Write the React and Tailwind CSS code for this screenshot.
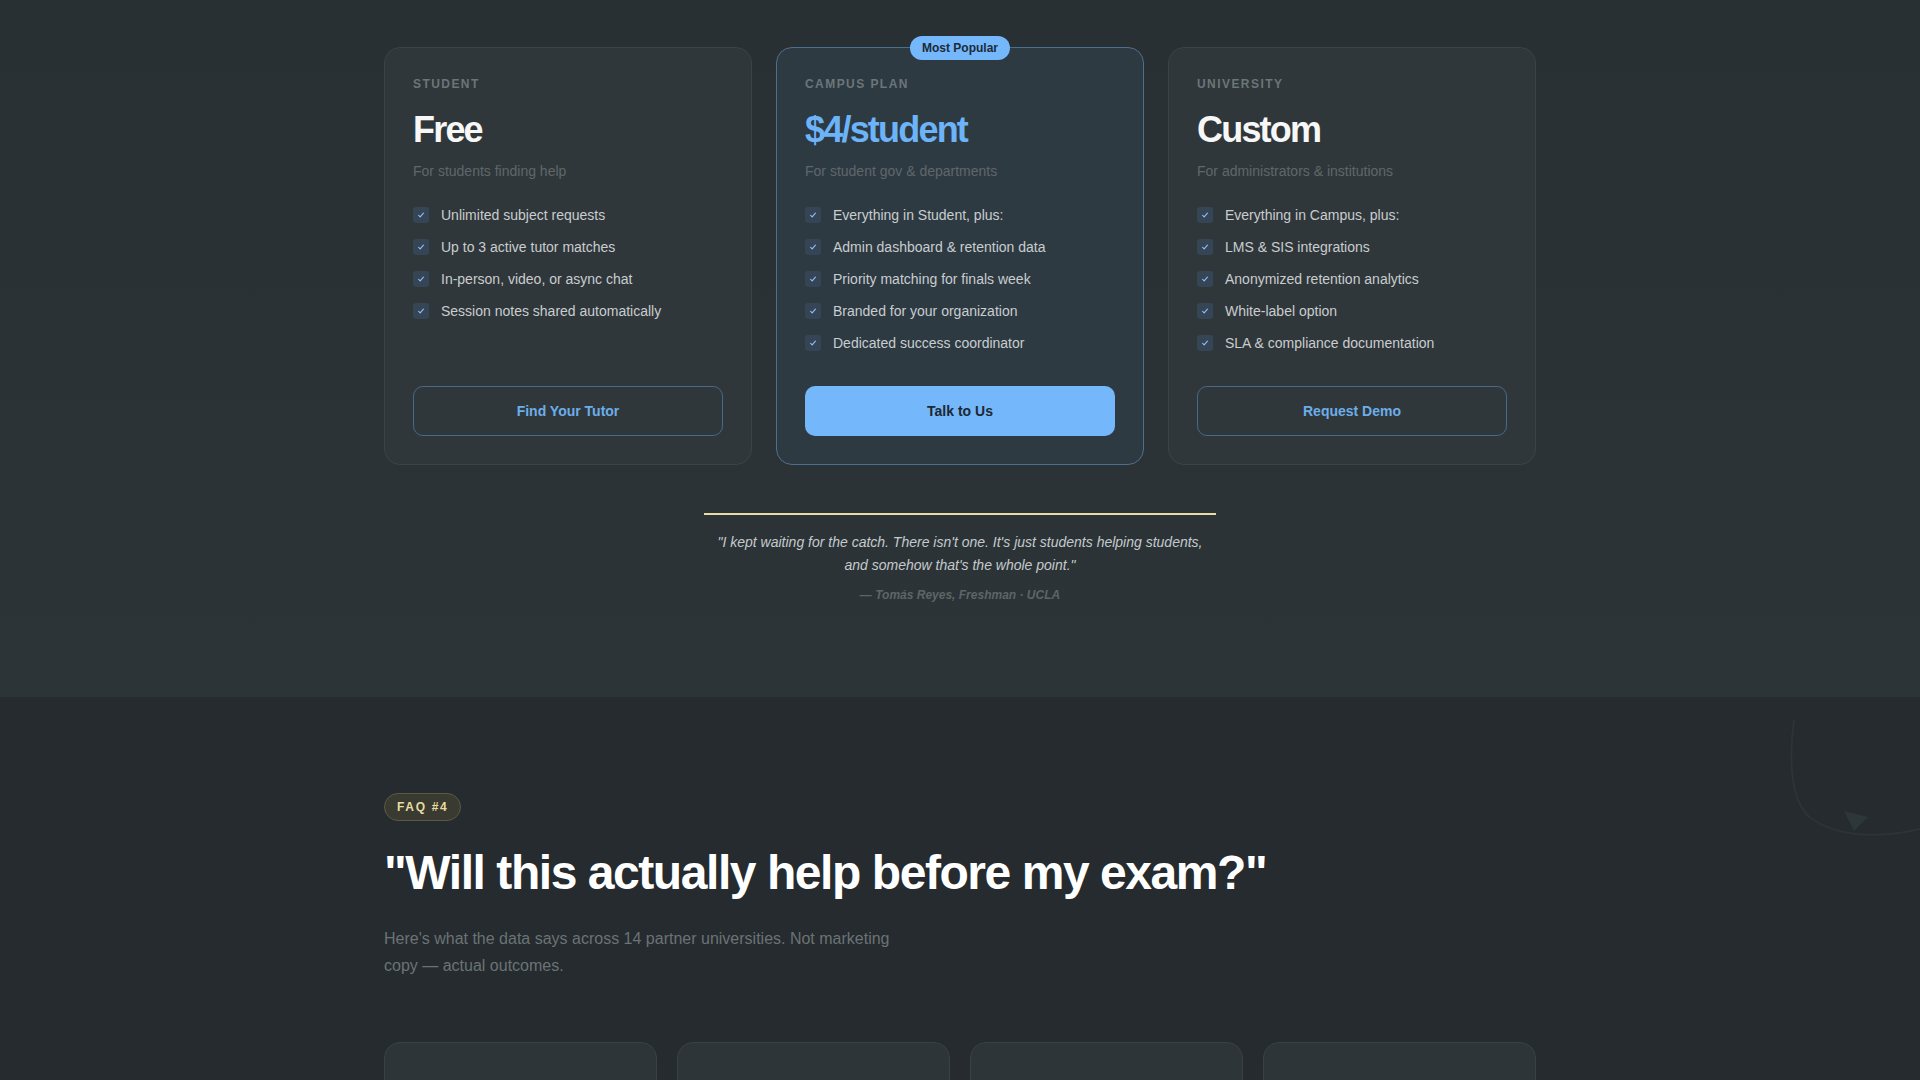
import React from "react";

const plans = [
  {
    label: "STUDENT",
    price: "Free",
    blurb: "For students finding help",
    features: [
      "Unlimited subject requests",
      "Up to 3 active tutor matches",
      "In-person, video, or async chat",
      "Session notes shared automatically",
    ],
    cta: "Find Your Tutor",
  },
  {
    label: "CAMPUS PLAN",
    price: "$4/student",
    blurb: "For student gov & departments",
    features: [
      "Everything in Student, plus:",
      "Admin dashboard & retention data",
      "Priority matching for finals week",
      "Branded for your organization",
      "Dedicated success coordinator",
    ],
    cta: "Talk to Us",
    featured: true,
  },
  {
    label: "UNIVERSITY",
    price: "Custom",
    blurb: "For administrators & institutions",
    features: [
      "Everything in Campus, plus:",
      "LMS & SIS integrations",
      "Anonymized retention analytics",
      "White-label option",
      "SLA & compliance documentation",
    ],
    cta: "Request Demo",
  },
];

function Check() {
  return (
    <span className="flex h-4 w-4 shrink-0 items-center justify-center rounded-[3px] bg-[#354555]">
      <svg width="8" height="8" viewBox="0 0 8 8" fill="none">
        <path d="M1.6 4.3 L3.2 5.8 L6.4 2.2" stroke="#8fc3f5" strokeWidth="1.1" strokeLinecap="round" strokeLinejoin="round" />
      </svg>
    </span>
  );
}

function PlanCard({ plan }) {
  const { featured } = plan;
  return (
    <div
      className={
        featured
          ? "relative flex h-full flex-col rounded-2xl border border-[#4d6f8f] bg-[#2e3a42] p-7"
          : "relative flex h-full flex-col rounded-2xl border border-[#3b4346] bg-[#30373a] p-7"
      }
    >
      {featured && (
        <span className="absolute left-1/2 top-0 -translate-x-1/2 -translate-y-1/2 rounded-full bg-[#74b7fb] px-3 py-[4px] text-xs font-bold text-[#1d2a38]">
          Most Popular
        </span>
      )}
      <p className="text-xs font-semibold tracking-[0.12em] text-[#6c7579]">{plan.label}</p>
      <h3
        className={
          featured
            ? "mt-[18px] text-4xl font-bold tracking-[-0.05em] leading-10 text-[#6cb3f7]"
            : "mt-[18px] text-4xl font-bold tracking-[-0.05em] leading-10 text-[#f7f7f7]"
        }
      >
        {plan.price}
      </h3>
      <p className="mt-[11px] text-sm text-[#5f676b]">{plan.blurb}</p>
      <ul className="mt-6 flex-1 space-y-3">
        {plan.features.map((f) => (
          <li key={f} className="flex items-center gap-3 text-sm leading-5 text-[#c8cdd0]">
            <Check />
            <span>{f}</span>
          </li>
        ))}
      </ul>
      <button
        className={
          featured
            ? "mt-[33px] h-[50px] w-full rounded-[10px] bg-[#74b7fb] text-sm font-bold text-[#1d2833]"
            : "mt-[33px] h-[50px] w-full rounded-[10px] border border-[#46688a] text-sm font-bold text-[#6caee9]"
        }
      >
        {plan.cta}
      </button>
    </div>
  );
}

export default function App() {
  return (
    <div className="min-h-screen bg-[#252b2e] font-['Liberation_Sans',Arial,sans-serif]">
      {/* pricing */}
      <section className="bg-gradient-to-b from-[#293034] to-[#2c3437] px-6 pt-[47px] pb-[94px]">
        <div className="mx-auto max-w-6xl">
          <div className="grid grid-cols-3 gap-6">
            {plans.map((p) => (
              <PlanCard key={p.label} plan={p} />
            ))}
          </div>

          <div className="mx-auto mt-12 max-w-lg text-center">
            <div className="h-[2px] w-full bg-[#e8dca0]" />
            <p className="mx-auto mt-4 max-w-[500px] text-sm italic leading-[23px] text-[#c5cacd]">
              "I kept waiting for the catch. There isn't one. It's just students helping students, and somehow
              that's the whole point."
            </p>
            <p className="mt-2.5 text-xs font-semibold italic text-[#5d6569]">
              — Tomás Reyes, Freshman · UCLA
            </p>
          </div>
        </div>
      </section>

      {/* faq */}
      <section className="relative overflow-hidden bg-[#252b2e] px-6 pt-24 pb-10">
        <svg
          className="absolute right-0 top-[18px]"
          width="132"
          height="150"
          viewBox="0 0 132 150"
          fill="none"
        >
          <path
            d="M6 6 C 0 50, 4 90, 24 104 S 80 126, 132 114"
            stroke="#2b3437"
            strokeWidth="2"
            strokeLinecap="round"
          />
          <path d="M56 96 L 80 102 L 66 116 Z" fill="#2c363b" />
        </svg>
        <div className="mx-auto max-w-6xl">
          <span className="inline-flex items-center rounded-full border border-[#5a5a44] bg-[#393a30] px-3 py-[5px] text-xs font-bold tracking-[0.14em] text-[#e8dca0]">
            FAQ #4
          </span>
          <h2 className="mt-[28px] text-5xl font-bold tracking-[-0.03em] text-white">
            "Will this actually help before my exam?"
          </h2>
          <p className="mt-[28px] max-w-[520px] text-base leading-[27px] text-[#6b7376]">
            Here's what the data says across 14 partner universities. Not marketing copy — actual outcomes.
          </p>
          <div className="mt-[63px] grid grid-cols-4 gap-5">
            {[0, 1, 2, 3].map((i) => (
              <div key={i} className="h-48 rounded-2xl border border-[#394144] bg-[#2e3538]" />
            ))}
          </div>
        </div>
      </section>
    </div>
  );
}
